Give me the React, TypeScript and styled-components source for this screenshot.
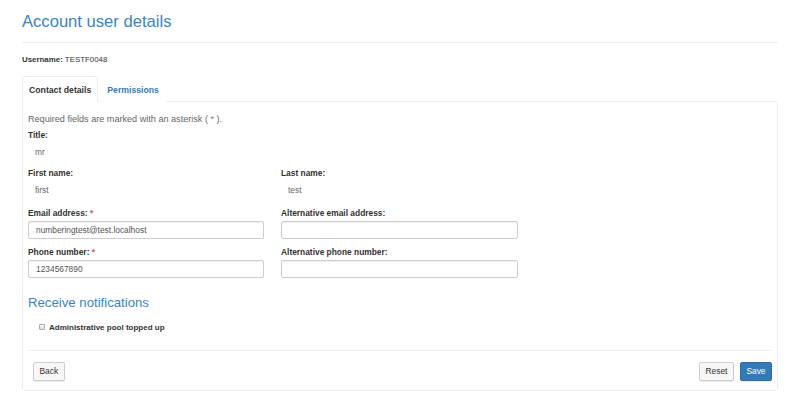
import React from "react";
import styled, { createGlobalStyle } from "styled-components";

const GlobalStyle = createGlobalStyle`
  body {
    margin: 0;
    background: #fff;
    font-family: "Liberation Sans", Arial, sans-serif;
    font-size: 8.4px;
    color: #333;
  }
`;

type Field = {
  label: string;
  value?: string;
  required?: boolean;
};

export default function App() {
  return (
    <Page>
      <GlobalStyle />
      <Heading>Account user details</Heading>
      <Rule />
      <Username>
        <b>Username:</b> TESTF0048
      </Username>
      <Tabs>
        <Tab $active>Contact details</Tab>
        <Tab>Permissions</Tab>
      </Tabs>
      <Panel>
        <Hint>
          Required fields are marked with an asterisk ( <Star>*</Star> ).
        </Hint>
        <Label>Title:</Label>
        <StaticValue>mr</StaticValue>
        <Row>
          <Group>
            <Label>First name:</Label>
            <StaticValue>first</StaticValue>
          </Group>
          <Group>
            <Label>Last name:</Label>
            <StaticValue>test</StaticValue>
          </Group>
        </Row>
        <Row $gap={2}>
          <InputField label="Email address:" value="numberingtest@test.localhost" required />
          <InputField label="Alternative email address:" />
        </Row>
        <Row $gap={2}>
          <InputField label="Phone number:" value="1234567890" required />
          <InputField label="Alternative phone number:" />
        </Row>
        <SubHeading>Receive notifications</SubHeading>
        <CheckRow>
          <Check type="checkbox" />
          Administrative pool topped up
        </CheckRow>
        <Footer>
          <Button>Back</Button>
          <Actions>
            <Button>Reset</Button>
            <Button $primary>Save</Button>
          </Actions>
        </Footer>
      </Panel>
    </Page>
  );
}

function InputField({ label, value, required }: Field) {
  return (
    <Group>
      <Label>
        {label}
        {required && <Star> *</Star>}
      </Label>
      <Input defaultValue={value ?? ""} />
    </Group>
  );
}

const Page = styled.div`
  padding: 0 22px;
`;

const Heading = styled.h1`
  margin: 0;
  padding-top: 12px;
  font-size: 16.6px;
  font-weight: 400;
  line-height: 19px;
  color: #3a85c0;
`;

const Rule = styled.div`
  margin-top: 11px;
  border-top: 1.5px solid #eee;
`;

const Username = styled.div`
  margin-top: 12px;
  line-height: 10px;
  font-size: 7.9px;
  b {
    font-weight: 700;
  }
`;

const Tabs = styled.div`
  display: flex;
  margin-top: 11px;
`;

const Tab = styled.div<{ $active?: boolean }>`
  height: 25px;
  padding: 0 6px;
  display: flex;
  align-items: center;
  font-size: 8.7px;
  font-weight: 700;
  color: ${({ $active }) => ($active ? "#333" : "#337ab7")};
  border: 1.5px solid ${({ $active }) => ($active ? "#eee" : "transparent")};
  border-bottom: 0;
  border-radius: 3px 3px 0 0;
  background: #fff;
  margin-right: 2px;
  margin-bottom: -1.5px;
  position: relative;
`;

const Panel = styled.div`
  border: 1.5px solid #eee;
  border-radius: 0 0 3px 3px;
  padding: 8px 5px 9px 5px;
`;

const Hint = styled.div`
  color: #666;
  font-size: 9.1px;
  line-height: 10px;
  margin-top: 4px;
`;

const Star = styled.span`
  color: #d9534f;
`;

const Label = styled.div`
  font-weight: 700;
  line-height: 10px;
  margin-top: 6px;
`;

const StaticValue = styled.div`
  color: #666;
  padding: 7px 7px 0;
  line-height: 10px;
  margin-bottom: 5px;
`;

const Row = styled.div<{ $gap?: number }>`
  display: grid;
  grid-template-columns: 236px 237px;
  column-gap: 17px;
  margin-top: ${({ $gap }) => $gap ?? 0}px;
`;

const Group = styled.div`
  display: flex;
  flex-direction: column;
`;

const Input = styled.input`
  box-sizing: border-box;
  margin-top: 3px;
  height: 18px;
  width: 100%;
  border: 1px solid #ccc;
  border-radius: 2px;
  box-shadow: inset 0 1px 1px rgba(0, 0, 0, 0.06);
  padding: 0 7px;
  font-family: inherit;
  font-size: 8.4px;
  color: #555;
  outline: none;
`;

const SubHeading = styled.h3`
  margin: 17px 0 0;
  font-size: 13.2px;
  font-weight: 400;
  line-height: 16px;
  color: #3a85c0;
`;

const CheckRow = styled.label`
  display: flex;
  align-items: center;
  gap: 4px;
  padding-left: 11px;
  margin-top: 12px;
  font-weight: 700;
  font-size: 8px;
`;

const Check = styled.input`
  appearance: none;
  margin: 0;
  width: 6px;
  height: 6px;
  border: 1px solid #a9a9a9;
  border-radius: 1px;
  background: linear-gradient(#fafafa, #e2e2e2);
`;

const Footer = styled.div`
  display: flex;
  justify-content: space-between;
  align-items: center;
  margin-top: 18px;
  border-top: 1px solid #eee;
  padding: 11px 0 0 5px;
`;

const Actions = styled.div`
  display: flex;
  gap: 6px;
`;

const Button = styled.button<{ $primary?: boolean }>`
  height: 19px;
  padding: 0 5.5px;
  font-family: inherit;
  font-size: 8.4px;
  border-radius: 2px;
  border: 1px solid ${({ $primary }) => ($primary ? "#2e6da4" : "#ccc")};
  background: ${({ $primary }) => ($primary ? "#337ab7" : "#f7f7f7")};
  color: ${({ $primary }) => ($primary ? "#fff" : "#333")};
  box-shadow: 0 1px 1px rgba(0, 0, 0, 0.08);
`;
